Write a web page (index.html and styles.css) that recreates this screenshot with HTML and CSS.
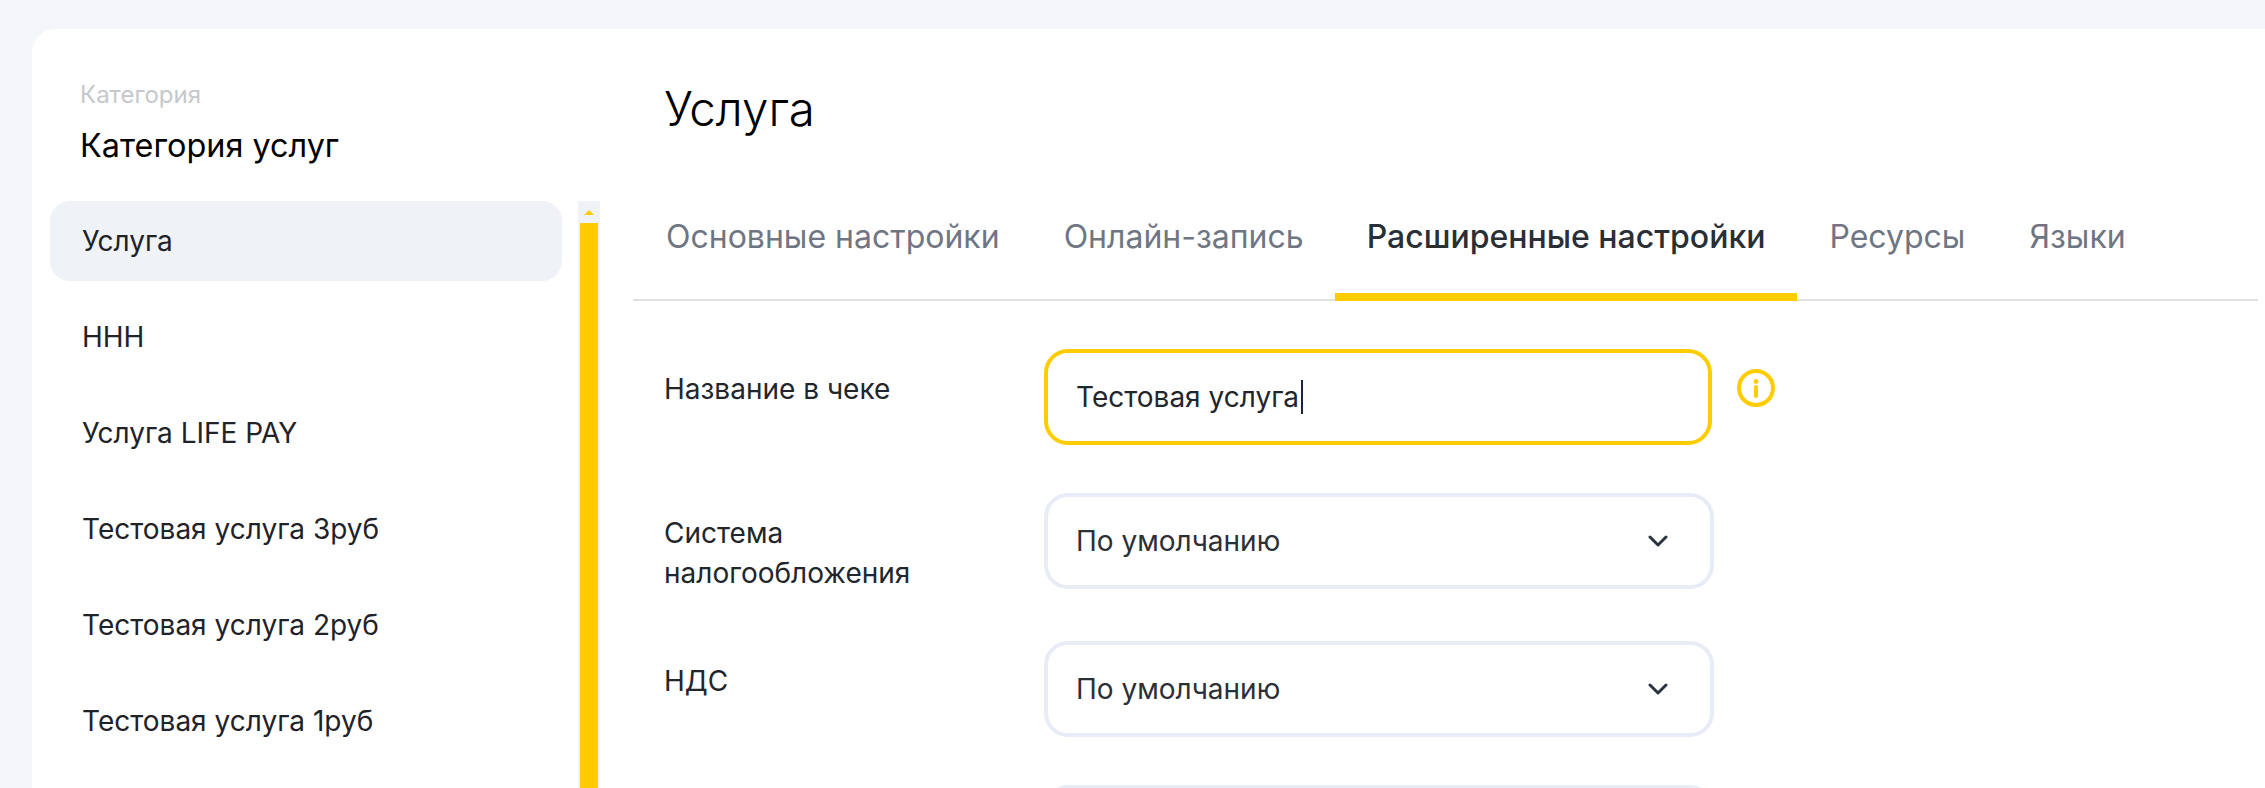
FILE: index.html
```html
<!DOCTYPE html>
<html lang="ru">
<head>
    <meta charset="UTF-8">
    <meta name="viewport" content="width=device-width, initial-scale=1.0">
    <title>Услуга</title>
    <link rel="stylesheet" href="styles.css">
</head>
<body>

    <div class="card">
        <div class="sidebar">
            <div class="category">
                <div class="category-label">Категория</div>
                <div class="category-name">Категория услуг</div>
            </div>
            <div class="list-wrap">
                <ul class="service-list">
                    <li class="service active">Услуга</li>
                    <li class="service">ННН</li>
                    <li class="service">Услуга LIFE PAY</li>
                    <li class="service">Тестовая услуга 3руб</li>
                    <li class="service">Тестовая услуга 2руб</li>
                    <li class="service">Тестовая услуга 1руб</li>
                </ul>
                <div class="scrollbar">
                    <div class="scroll-arrow"></div>
                    <div class="scroll-thumb"></div>
                </div>
            </div>
        </div>

        <div class="main">
            <h1 class="title">Услуга</h1>

            <div class="tabs">
                <a class="tab" href="#">Основные настройки</a>
                <a class="tab" href="#">Онлайн-запись</a>
                <a class="tab tab-active" href="#">Расширенные настройки</a>
                <a class="tab" href="#">Ресурсы</a>
                <a class="tab" href="#">Языки</a>
            </div>

            <div class="form">
                <div class="row">
                    <div class="label">Название в чеке</div>
                    <div class="field field-focus"><span>Тестовая услуга</span><i class="caret"></i></div>
                    <svg class="info" width="38" height="38" viewBox="0 0 38 38" fill="none">
                        <circle cx="19" cy="19" r="17" stroke="#ffcc00" stroke-width="4"/>
                        <circle cx="19" cy="12.5" r="2.4" fill="#ffcc00"/>
                        <path d="M19 18v9" stroke="#ffcc00" stroke-width="4" stroke-linecap="round"/>
                    </svg>
                </div>
                <div class="row">
                    <div class="label">Система налогообложения</div>
                    <div class="field">
                        <span>По умолчанию</span>
                        <svg class="chevron" width="20" height="12" viewBox="0 0 20 12" fill="none">
                            <path d="M2 2l8 8 8-8" stroke="#2b3340" stroke-width="3" stroke-linecap="round" stroke-linejoin="round"/>
                        </svg>
                    </div>
                </div>
                <div class="row">
                    <div class="label">НДС</div>
                    <div class="field">
                        <span>По умолчанию</span>
                        <svg class="chevron" width="20" height="12" viewBox="0 0 20 12" fill="none">
                            <path d="M2 2l8 8 8-8" stroke="#2b3340" stroke-width="3" stroke-linecap="round" stroke-linejoin="round"/>
                        </svg>
                    </div>
                </div>
                <div class="row">
                    <div class="label"></div>
                    <div class="field"></div>
                </div>
            </div>
        </div>
    </div>

</body>
</html>
```

FILE: styles.css
```css
html, body {
    height: 100%;
    overflow: hidden;
}
body {
    margin: 0;
    padding: 29px 0 0 32px;
    box-sizing: border-box;
    font-family: Inter, Roboto, sans-serif;
    background-color: #f4f6fa;
    color: #22262b;
}
.card {
    display: flex;
    height: 759px;
    overflow: hidden;
    padding-right: 7px;
    border-radius: 24px 0 0 0;
    background-color: #fff;
}
.sidebar {
    width: 601px;
    flex-shrink: 0;
    padding-left: 18px;
    box-sizing: border-box;
}
.category {
    height: 172px;
    padding: 51px 0 0 30px;
    box-sizing: border-box;
}
.category-label {
    font-size: 24px;
    line-height: 30px;
    color: #c5c9cc;
}
.category-name {
    margin-top: 16px;
    font-size: 32.4px;
    line-height: 40px;
    color: #000;
}
.list-wrap {
    display: flex;
    gap: 16px;
}
.service-list {
    width: 512px;
    margin: 0;
    padding: 0;
    list-style: none;
}
.service {
    height: 80px;
    margin-bottom: 16px;
    padding-left: 32px;
    border-radius: 20px;
    font-size: 28px;
    line-height: 80px;
    color: #1f2328;
}
.active {
    background-color: #eff2f7;
}
.scrollbar {
    width: 22px;
    background-color: #eff2f7;
}
.scroll-arrow {
    height: 22px;
    position: relative;
}
.scroll-arrow::after {
    content: "";
    position: absolute;
    left: 6px;
    top: 9px;
    border-left: 5px solid transparent;
    border-right: 5px solid transparent;
    border-bottom: 5px solid #ffcc00;
}
.scroll-thumb {
    width: 18px;
    height: 900px;
    margin-left: 2px;
    background-color: #ffcc00;
}
.main {
    flex: 1;
    min-width: 0;
}
.title {
    height: 172px;
    margin: 0;
    padding: 52px 0 0 31px;
    box-sizing: border-box;
    font-size: 47.5px;
    font-weight: 300;
    line-height: 56px;
    color: #000;
}
.tabs {
    display: flex;
    height: 101px;
    margin-top: -1px;
    padding-left: 1px;
    box-sizing: border-box;
    border-bottom: 2px solid #dedfe1;
}
.tab {
    height: 101px;
    padding: 17px 32px 0;
    box-sizing: border-box;
    font-size: 32px;
    line-height: 40px;
    text-decoration: none;
    color: #6f7683;
}
.tab-active {
    margin-left: -1px;
    border-bottom: 8px solid #ffcc00;
    font-weight: 500;
    color: #2a2f36;
}
.form {
    padding: 48px 0 0 31px;
}
.row {
    display: flex;
    align-items: flex-start;
    margin-bottom: 48px;
}
.label {
    width: 380px;
    flex-shrink: 0;
    padding: 20px 100px 0 0;
    box-sizing: border-box;
    font-size: 28px;
    line-height: 40px;
    color: #22262b;
}
.field {
    display: flex;
    align-items: center;
    justify-content: space-between;
    width: 670px;
    height: 96px;
    padding: 0 42px 0 28px;
    box-sizing: border-box;
    border: 4px solid #e8ecf6;
    border-radius: 24px;
    font-size: 28px;
    color: #2b3036;
}
.field-focus {
    justify-content: flex-start;
    width: 668px;
    border-color: #ffcc00;
    color: #22262b;
}
.caret {
    width: 2px;
    height: 34px;
    margin-left: 2px;
    background-color: #1b2440;
}
.info {
    margin: 20px 0 0 25px;
}
```
